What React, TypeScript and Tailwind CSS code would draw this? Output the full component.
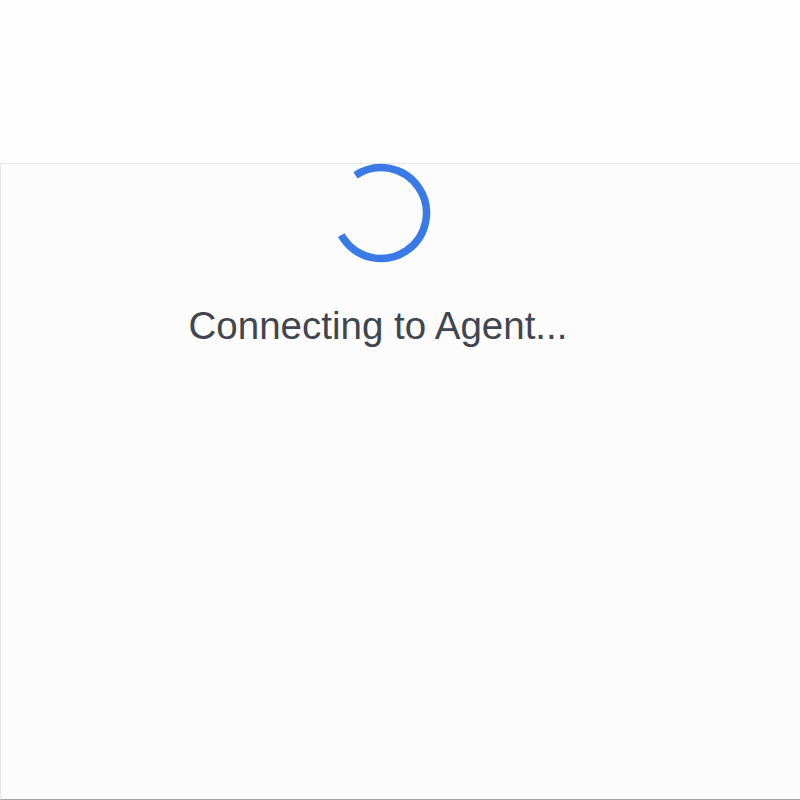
export default function App() {
  return (
    <div className="w-[800px] h-[800px] bg-[#fcfcfc] flex flex-col overflow-hidden">
      <div className="h-[163px] shrink-0 bg-[#fdfdfd]" />
      <div className="flex-1 border-t border-l border-b border-t-[#e6e6e6] border-l-[#e9e9e9] border-b-[#a3a3a3] bg-[#fcfcfc] flex flex-col items-center pr-10">
        <svg width="100" height="100" viewBox="0 0 100 100" className="-mt-px">
          <circle
            cx="50"
            cy="50"
            r="45.5"
            fill="none"
            stroke="#3a7ae6"
            strokeWidth="7.5"
            strokeDasharray="218 68"
            transform="rotate(236 50 50)"
          />
        </svg>
        <p
          className="mt-[44px] mr-[5px] text-[38.5px] leading-[38px] text-[#40454f]"
          style={{ fontFamily: '"Liberation Sans", Arial, sans-serif' }}
        >
          Connecting to Agent...
        </p>
      </div>
    </div>
  );
}
